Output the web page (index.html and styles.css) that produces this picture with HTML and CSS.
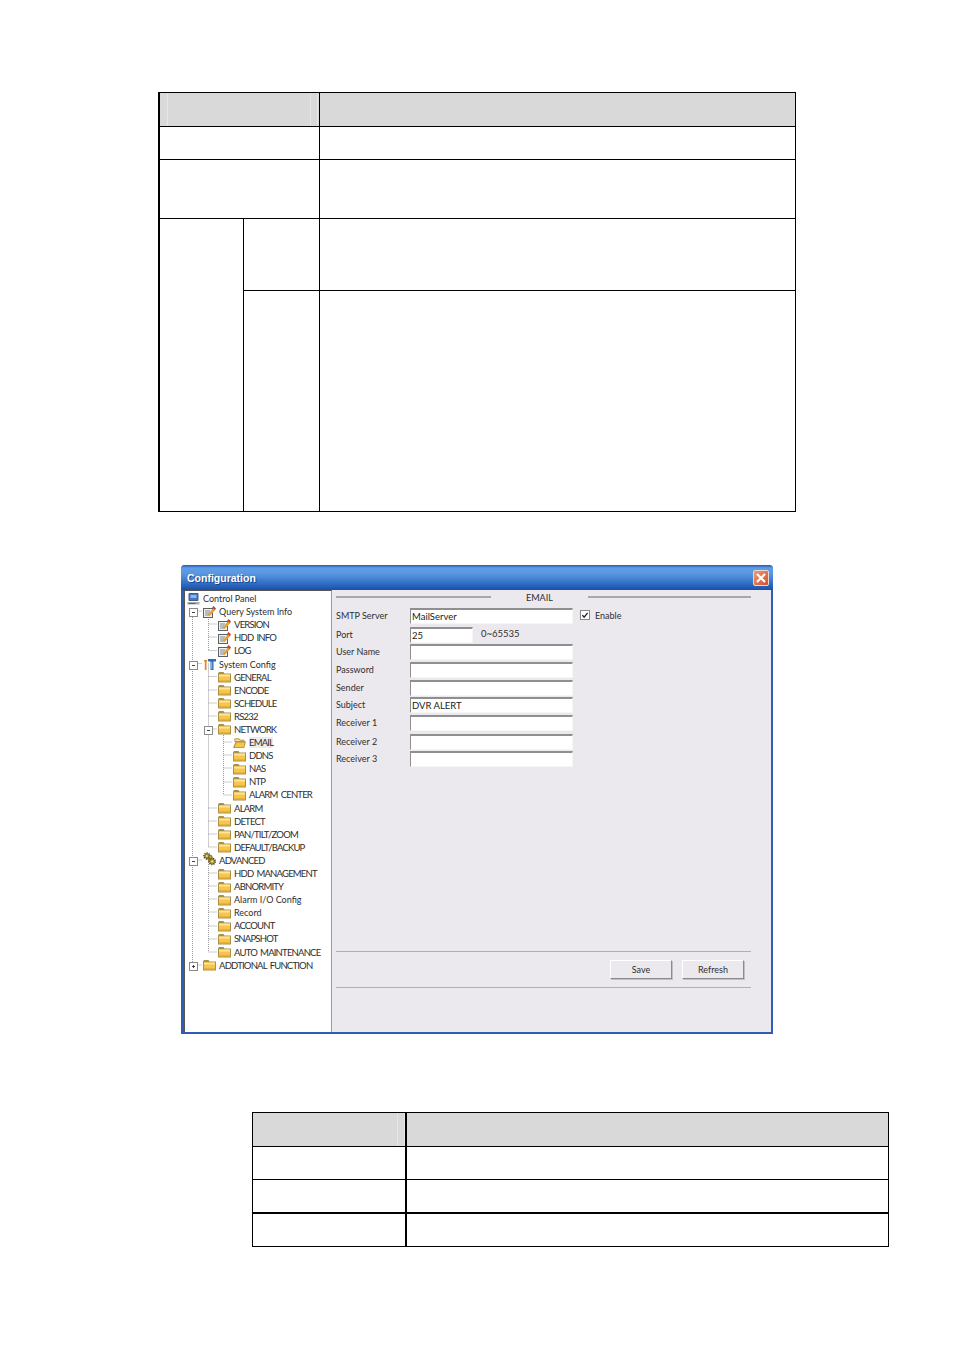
FILE: index.html
```html
<!DOCTYPE html>
<html lang="en">
<head>
    <meta charset="UTF-8">
    <title>Configuration - EMAIL</title>
    <link rel="stylesheet" href="styles.css">
</head>
<body>
    <!-- shared icons -->
    <svg class="icon-defs" width="0" height="0">
        <symbol id="i-folder" viewBox="0 0 13 11">
            <path d="M0 2 1 .5h4.500l1 1.500H13v9H0z" fill="#a8904a"/>
            <path d="M1 3h11v7H1z" fill="#f7c648"/>
            <path d="M1 3h11v2H1z" fill="#fde49a"/>
            <path d="M1 9h11v1H1z" fill="#dd9f2c"/>
        </symbol>
        <symbol id="i-folder-open" viewBox="0 0 14 11">
            <path d="M2 4V1h4.500l1 1.500H12V4z" fill="#fbe39c" stroke="#a8904a"/>
            <path d="M3 4h11l-2 7H0z" fill="#a8904a"/>
            <path d="M3.800 5h8.900L11.200 10H1.500z" fill="#f7c648"/>
        </symbol>
        <symbol id="i-note" viewBox="0 0 13 12">
            <path d="M0 2h10v10H0z" fill="#5a6064"/>
            <path d="M1 3h8v8H1z" fill="#f0f0ea"/>
            <path d="M2 5h5M2 7h4M2 9h5" stroke="#7f8a90"/>
            <path d="M4.500 8.500 10.500 2l2 1.800L6.500 10z" fill="#e2a03c"/>
            <path d="M10.500 0 13 2.500 11.800 4 9.200 1.600z" fill="#c8392f"/>
        </symbol>
        <symbol id="i-monitor" viewBox="0 0 12 12">
            <path d="M1.500.5h9v7h-9z" fill="#3f78c8" stroke="#4a5a78"/>
            <path d="M3 2h6v3H3z" fill="#8db8ea"/>
            <path d="M0 9h12v2.500H0z" fill="#a8adb8"/>
            <path d="M1 10h7v1H1z" fill="#5d6678"/>
        </symbol>
        <symbol id="i-tools" viewBox="0 0 13 12">
            <path d="M1 2h3v1.500H3.500V12H1.800V3.500H1z" fill="#d98a2a"/>
            <path d="M5 1h8v2.500h-2.500V12H7.500V3.500H5z" fill="#2f6fb8"/>
            <path d="M8.200 4h1v7h-1z" fill="#8cc0ee"/>
        </symbol>
        <symbol id="i-gears" viewBox="0 0 14 14">
            <g fill="none" stroke="#4d4418" stroke-width="1.800" stroke-dasharray="1.300 1">
                <circle cx="4.200" cy="3.800" r="3.100"/>
                <circle cx="9.800" cy="9.600" r="3.300"/>
            </g>
            <path d="M4 6 8 3.500l3 2.500-5 4z" fill="#8f7d2c"/>
            <g fill="#c6a436" stroke="#5f5320" stroke-width=".8">
                <circle cx="4.200" cy="3.800" r="2.400"/>
                <circle cx="9.800" cy="9.600" r="2.600"/>
                <circle cx="8" cy="4.800" r="1.800"/>
            </g>
            <g fill="#f4e7a8">
                <circle cx="4.200" cy="3.800" r=".9"/>
                <circle cx="9.800" cy="9.600" r="1"/>
            </g>
        </symbol>
    </svg>

    <main class="page">
        <table class="doc-table doc-table-top">
            <colgroup>
                <col class="c-84"><col class="c-76"><col>
            </colgroup>
            <tr class="r-34"><th colspan="2" class="head-a"></th><th></th></tr>
            <tr class="r-33"><td colspan="2"></td><td></td></tr>
            <tr class="r-59"><td colspan="2"></td><td></td></tr>
            <tr class="r-72"><td rowspan="2"></td><td></td><td></td></tr>
            <tr class="r-221"><td></td><td></td></tr>
        </table>

        <section class="window">
            <header class="title-bar">
                <span class="title">Configuration</span>
                <span class="close-btn">
                    <svg width="10" height="10" viewBox="0 0 10 10"><path d="M1 1l8 8M9 1l-8 8" stroke="#fff" stroke-width="2.200"/></svg>
                </span>
            </header>
            <div class="window-body">
                <nav class="tree">
                    <svg class="tree-lines" width="146" height="442">
                        <path d="M8.500 21V375M8.500 21H18M8.500 73.500H18M8.500 270H18M8.500 375H18
                                 M24.500 21V60.500M24.500 34H33M24.500 47H33M24.500 60.500H33
                                 M24.500 73.500V257M24.500 86.500H33M24.500 100H33M24.500 113H33M24.500 126H33M24.500 139H33M24.500 218H33M24.500 231H33M24.500 244H33M24.500 257H33
                                 M24.500 270V362M24.500 283H33M24.500 296H33M24.500 309H33M24.500 322H33M24.500 336H33M24.500 349H33M24.500 362H33
                                 M39.500 139V205M39.500 152H48M39.500 165H48M39.500 178H48M39.500 192H48M39.500 205H48"
                              fill="none" stroke="#9a9a9a" stroke-dasharray="1 1"/>
                    </svg>
                    <div class="node"><svg class="ico"><use href="#i-monitor"/></svg><span>Control Panel</span></div>
                    <div class="node lv1"><b class="twisty minus"></b><svg class="ico"><use href="#i-note"/></svg><span>Query System Info</span></div>
                    <div class="node lv2"><b class="twisty"></b><svg class="ico"><use href="#i-note"/></svg><span class="caps">VERSION</span></div>
                    <div class="node lv2"><b class="twisty"></b><svg class="ico"><use href="#i-note"/></svg><span class="caps">HDD INFO</span></div>
                    <div class="node lv2"><b class="twisty"></b><svg class="ico"><use href="#i-note"/></svg><span class="caps">LOG</span></div>
                    <div class="node lv1"><b class="twisty minus"></b><svg class="ico"><use href="#i-tools"/></svg><span>System Config</span></div>
                    <div class="node lv2"><b class="twisty"></b><svg class="ico"><use href="#i-folder"/></svg><span class="caps">GENERAL</span></div>
                    <div class="node lv2"><b class="twisty"></b><svg class="ico"><use href="#i-folder"/></svg><span class="caps">ENCODE</span></div>
                    <div class="node lv2"><b class="twisty"></b><svg class="ico"><use href="#i-folder"/></svg><span class="caps">SCHEDULE</span></div>
                    <div class="node lv2"><b class="twisty"></b><svg class="ico"><use href="#i-folder"/></svg><span class="caps">RS232</span></div>
                    <div class="node lv2"><b class="twisty minus"></b><svg class="ico"><use href="#i-folder"/></svg><span class="caps">NETWORK</span></div>
                    <div class="node lv3 selected"><b class="twisty"></b><svg class="ico"><use href="#i-folder-open"/></svg><span class="caps">EMAIL</span></div>
                    <div class="node lv3"><b class="twisty"></b><svg class="ico"><use href="#i-folder"/></svg><span class="caps">DDNS</span></div>
                    <div class="node lv3"><b class="twisty"></b><svg class="ico"><use href="#i-folder"/></svg><span class="caps">NAS</span></div>
                    <div class="node lv3"><b class="twisty"></b><svg class="ico"><use href="#i-folder"/></svg><span class="caps">NTP</span></div>
                    <div class="node lv3"><b class="twisty"></b><svg class="ico"><use href="#i-folder"/></svg><span class="caps">ALARM CENTER</span></div>
                    <div class="node lv2"><b class="twisty"></b><svg class="ico"><use href="#i-folder"/></svg><span class="caps">ALARM</span></div>
                    <div class="node lv2"><b class="twisty"></b><svg class="ico"><use href="#i-folder"/></svg><span class="caps">DETECT</span></div>
                    <div class="node lv2"><b class="twisty"></b><svg class="ico"><use href="#i-folder"/></svg><span class="caps">PAN/TILT/ZOOM</span></div>
                    <div class="node lv2"><b class="twisty"></b><svg class="ico"><use href="#i-folder"/></svg><span class="caps">DEFAULT/BACKUP</span></div>
                    <div class="node lv1"><b class="twisty minus"></b><svg class="ico ico-gears"><use href="#i-gears"/></svg><span class="caps">ADVANCED</span></div>
                    <div class="node lv2"><b class="twisty"></b><svg class="ico"><use href="#i-folder"/></svg><span class="caps">HDD MANAGEMENT</span></div>
                    <div class="node lv2"><b class="twisty"></b><svg class="ico"><use href="#i-folder"/></svg><span class="caps">ABNORMITY</span></div>
                    <div class="node lv2"><b class="twisty"></b><svg class="ico"><use href="#i-folder"/></svg><span>Alarm I/O Config</span></div>
                    <div class="node lv2"><b class="twisty"></b><svg class="ico"><use href="#i-folder"/></svg><span>Record</span></div>
                    <div class="node lv2"><b class="twisty"></b><svg class="ico"><use href="#i-folder"/></svg><span class="caps">ACCOUNT</span></div>
                    <div class="node lv2"><b class="twisty"></b><svg class="ico"><use href="#i-folder"/></svg><span class="caps">SNAPSHOT</span></div>
                    <div class="node lv2"><b class="twisty"></b><svg class="ico"><use href="#i-folder"/></svg><span class="caps">AUTO MAINTENANCE</span></div>
                    <div class="node lv1"><b class="twisty plus"></b><svg class="ico"><use href="#i-folder"/></svg><span class="caps">ADDTIONAL FUNCTION</span></div>
                </nav>

                <div class="panel">
                    <div class="panel-head">
                        <i class="rule rule-left"></i>
                        <span>EMAIL</span>
                        <i class="rule rule-right"></i>
                    </div>
                    <div class="form">
                        <label>SMTP Server</label>
                        <div class="field-row">
                            <div class="input">MailServer</div>
                            <span class="check"><svg width="9" height="9" viewBox="0 0 9 9"><path d="M1.500 4l2 2.500L7.500 1.500" fill="none" stroke="#222" stroke-width="1.500"/></svg></span>
                            <span class="check-label">Enable</span>
                        </div>
                        <label>Port</label>
                        <div class="field-row">
                            <div class="input input-short">25</div>
                            <span class="hint">0~65535</span>
                        </div>
                        <label>User Name</label><div class="input"></div>
                        <label>Password</label><div class="input"></div>
                        <label>Sender</label><div class="input"></div>
                        <label>Subject</label><div class="input">DVR ALERT</div>
                        <label>Receiver 1</label><div class="input"></div>
                        <label>Receiver 2</label><div class="input"></div>
                        <label>Receiver 3</label><div class="input"></div>
                    </div>
                    <div class="panel-foot">
                        <button class="btn">Save</button>
                        <button class="btn">Refresh</button>
                    </div>
                </div>
            </div>
        </section>

        <table class="doc-table doc-table-bottom">
            <colgroup>
                <col class="c-154"><col>
            </colgroup>
            <tr class="r-34"><th class="head-b"></th><th></th></tr>
            <tr class="r-33"><td></td><td></td></tr>
            <tr class="r-34 thick"><td></td><td></td></tr>
            <tr class="r-33"><td></td><td></td></tr>
        </table>
    </main>
</body>
</html>
```

FILE: styles.css
```css
* {
    margin: 0;
    padding: 0;
    box-sizing: border-box;
}

body {
    background: #fff;
    font-family: Lato, "Liberation Sans", sans-serif;
    font-size: 9px;
    color: #2e2e2e;
}

.icon-defs {
    position: absolute;
}

.page {
    padding-top: 92px;
}

/* document tables */
.doc-table {
    table-layout: fixed;
    border-collapse: separate;
    border-spacing: 0;
    border-top: 1px solid #000;
    border-left: 1px solid #000;
}

.doc-table td,
.doc-table th {
    padding: 0;
    border-right: 1px solid #000;
    border-bottom: 1px solid #000;
}

.doc-table th {
    background-color: #d9d9d9;
}

.doc-table-top {
    width: 638px;
    margin-left: 158px;
    border-left-width: 2px;
}

.doc-table-bottom {
    width: 637px;
    margin-left: 252px;
    margin-top: 78px;
}

.doc-table-bottom tr:first-child th:first-child,
.doc-table-bottom tr td:first-child {
    border-right-width: 2px;
}

.doc-table-bottom tr.thick td {
    border-bottom-width: 2px;
}

.head-a {
    background-image:
        linear-gradient(#e6e6e6, #e6e6e6),
        linear-gradient(#e6e6e6, #e6e6e6),
        linear-gradient(#e6e6e6, #e6e6e6);
    background-repeat: no-repeat;
    background-size: 1px 100%;
    background-position: 7px 0, 150px 0, 157px 0;
}

.head-b {
    background-image:
        linear-gradient(#e6e6e6, #e6e6e6),
        linear-gradient(#e6e6e6, #e6e6e6);
    background-repeat: no-repeat;
    background-size: 1px 100%;
    background-position: 144px 0, 151px 0;
}

.c-84 { width: 84px; }
.c-76 { width: 76px; }
.c-154 { width: 154px; }

.r-33 { height: 33px; }
.r-34 { height: 34px; }
.r-59 { height: 59px; }
.r-72 { height: 72px; }
.r-221 { height: 221px; }

/* config window */
.window {
    width: 592px;
    height: 469px;
    margin: 53px 0 0 181px;
    display: flex;
    flex-direction: column;
    background: #2c5fb4;
    border-radius: 4px 4px 0 0;
}

.title-bar {
    height: 25px;
    flex: none;
    display: flex;
    align-items: center;
    justify-content: space-between;
    padding: 1px 4px 0 6px;
    border-radius: 4px 4px 0 0;
    background: linear-gradient(#1f58b8 0, #5f9ce6 12%, #5a97e0 35%, #2f6cc4 75%, #1b4fa8 100%);
}

.title {
    color: #fff;
    font-family: "Liberation Sans", sans-serif;
    font-size: 10.5px;
    font-weight: bold;
    text-shadow: 1px 1px 0 #1c468f;
}

.close-btn {
    width: 16px;
    height: 16px;
    display: flex;
    align-items: center;
    justify-content: center;
    background: linear-gradient(135deg, #eb9a7c, #d2502c);
    border: 1px solid #e9d8d0;
    border-radius: 2px;
}

.window-body {
    flex: 1;
    display: flex;
    min-height: 0;
    margin: 0 2px 2px 3px;
    background: #ece9ee;
}

/* tree */
.tree {
    position: relative;
    width: 148px;
    flex: none;
    padding-top: 1px;
    background: #fff;
    border-top: 1px solid #555;
    border-left: 1px solid #555;
    border-right: 1px solid #9a9a9a;
}

.tree-lines {
    position: absolute;
    left: -1px;
    top: -1px;
}

.node {
    position: relative;
    height: 13.1px;
    display: flex;
    align-items: center;
    padding-left: 2px;
    white-space: nowrap;
}

.node.lv1 { padding-left: 5px; }
.node.lv2 { padding-left: 20px; }
.node.lv3 { padding-left: 35px; }

.caps {
    font-size: 9.5px;
    letter-spacing: -.8px;
    word-spacing: 1.5px;
}

.ico {
    width: 13px;
    height: 12px;
    flex: none;
    margin-right: 3px;
}

.ico-gears {
    height: 14px;
    margin: -2px 3px 0 0;
}

.twisty {
    position: relative;
    width: 13px;
    height: 7px;
    flex: none;
}

.twisty.minus::before,
.twisty.plus::before {
    content: '';
    position: absolute;
    left: -1px;
    top: 0;
    width: 7px;
    height: 7px;
    background:
        linear-gradient(#444, #444) center / 3px 1px no-repeat,
        #fff;
    border: 1px solid #8a8a8a;
}

.twisty.plus::before {
    background:
        linear-gradient(#444, #444) center / 3px 1px no-repeat,
        linear-gradient(#444, #444) center / 1px 3px no-repeat,
        #fff;
}

.selected span {
    background: #ececec;
}

/* right side form */
.panel {
    flex: 1;
    min-width: 0;
    display: flex;
    flex-direction: column;
    padding: 0 20px 44px 4px;
}

.panel-head {
    height: 18px;
    flex: none;
    display: flex;
    align-items: flex-start;
    line-height: 15px;
}

.rule {
    height: 2px;
    margin-top: 6px;
    background: #a9a7ac;
}

.rule-left {
    width: 155px;
    margin-right: 35px;
}

.rule-right {
    flex: 1;
    margin-left: 35px;
}

.form {
    display: grid;
    grid-template-columns: 74px 1fr;
    grid-template-rows: 19px 17px 18px 18px 17px 18px 19px 17px 16px;
    align-items: start;
}

.form label {
    line-height: 15px;
}

.field-row {
    display: flex;
    align-items: flex-start;
}

.input {
    width: 163px;
    height: 16px;
    padding-left: 1px;
    line-height: 13px;
    font-size: 9.5px;
    background: #fff;
    border: 1px solid #f6f6f6;
    border-top: 2px solid #8f8f8f;
    border-left: 1px solid #8f8f8f;
    white-space: nowrap;
    color: #222;
}

.input-short {
    width: 63px;
}

.hint {
    margin-left: 8px;
    font-size: 9.5px;
    line-height: 13px;
}

.check {
    width: 10px;
    height: 10px;
    margin: 2px 0 0 7px;
    display: flex;
    align-items: center;
    justify-content: center;
    background: #fff;
    border: 1px solid #888;
}

.check-label {
    margin-left: 5px;
    line-height: 15px;
}

.panel-foot {
    margin-top: auto;
    height: 37px;
    flex: none;
    display: flex;
    justify-content: flex-end;
    align-items: flex-start;
    gap: 10px;
    padding: 8px 7px 0 0;
    border-top: 1px solid #b0aeb3;
    border-bottom: 1px solid #b0aeb3;
}

.btn {
    width: 62px;
    height: 19px;
    font: inherit;
    color: #2e2e2e;
    background: #ece9ee;
    border: 1px solid;
    border-color: #fff #8c8a8e #8c8a8e #fff;
    box-shadow: 1px 1px 0 #c2c0c4;
}
```
